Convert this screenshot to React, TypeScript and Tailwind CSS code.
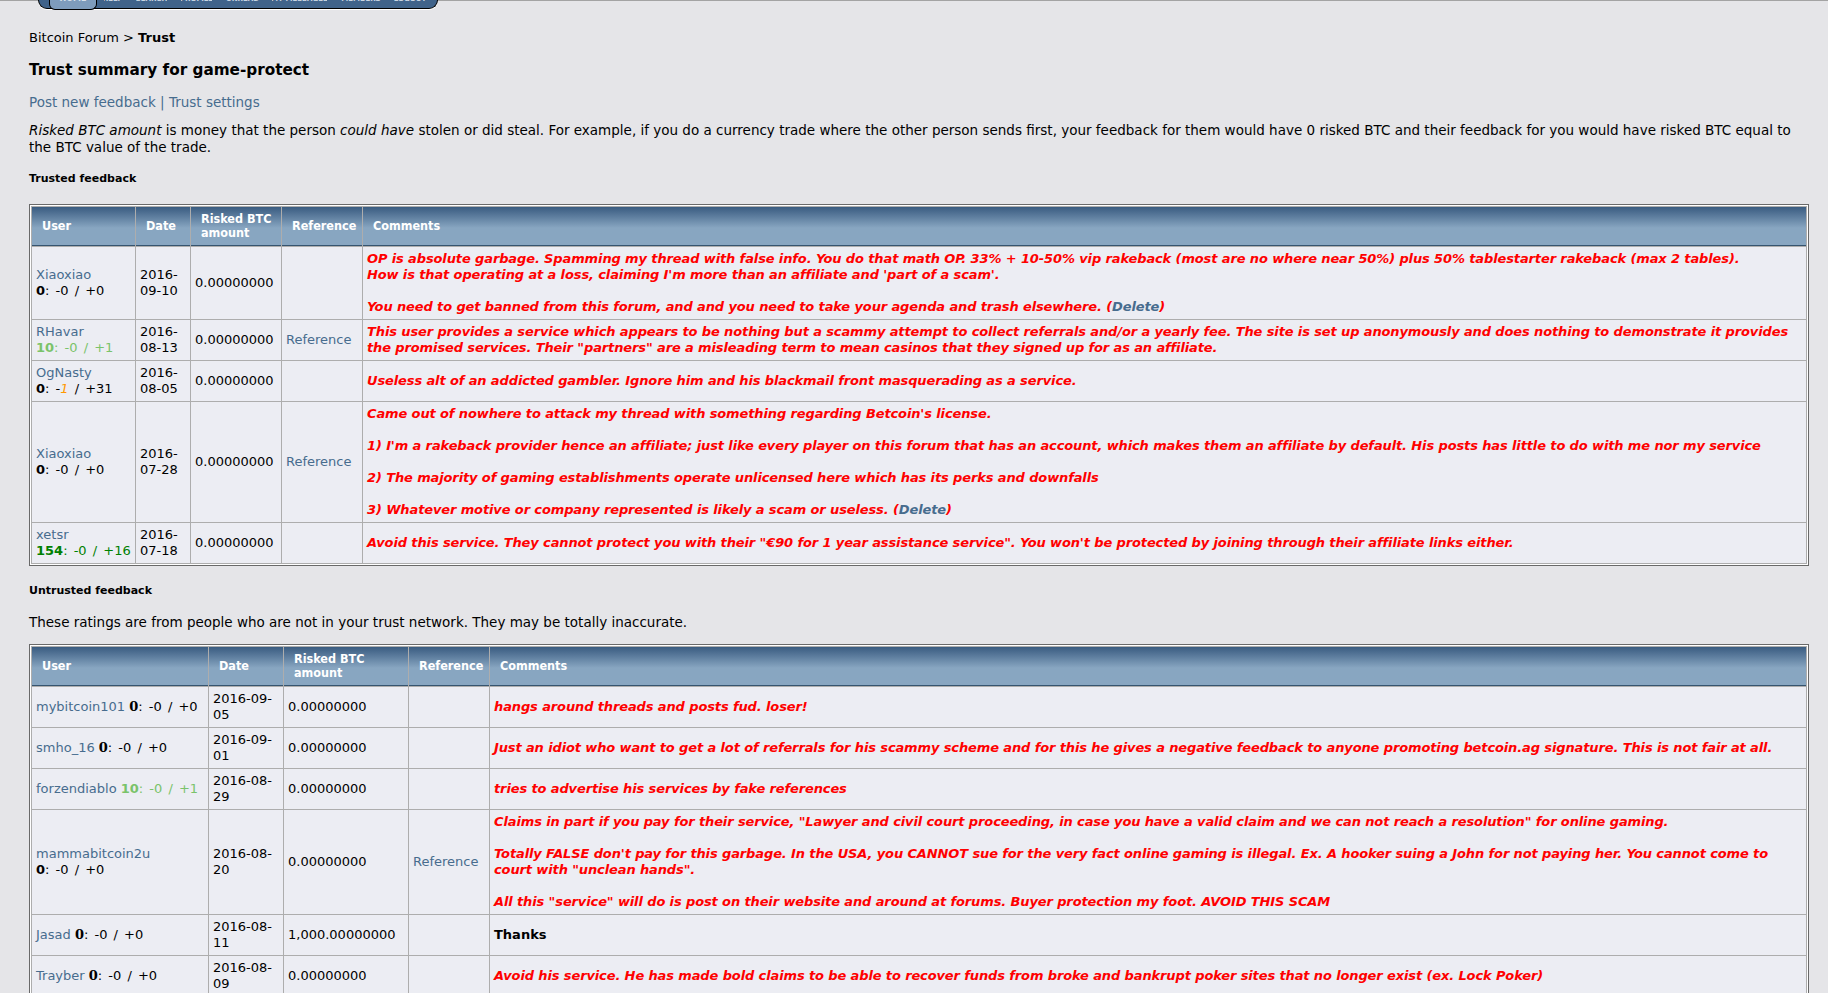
import React from 'react';

const tabs: { label: string; ml: string; w: string }[] = [
  { label: 'HELP', ml: 'ml-[7px]', w: 'w-[17px]' },
  { label: 'SEARCH', ml: 'ml-[15px]', w: 'w-[31px]' },
  { label: 'PROFILE', ml: 'ml-[14px]', w: 'w-[31px]' },
  { label: 'UNREAD', ml: 'ml-[14px]', w: 'w-[33px]' },
  { label: 'MY MESSAGES', ml: 'ml-[13px]', w: 'w-[55px]' },
  { label: 'MEMBERS', ml: 'ml-[14px]', w: 'w-[40px]' },
  { label: 'LOGOUT', ml: 'ml-[13px]', w: 'w-[32px]' },
];

const Link = ({ children }: { children: React.ReactNode }) => (
  <a href="#" className="text-[#476c8e]">
    {children}
  </a>
);

const Red = ({ children }: { children: React.ReactNode }) => (
  <span className="text-[13px] font-bold italic tracking-[-0.12px] text-[#ff0000]">{children}</span>
);

const Th = ({ children, w }: { children: React.ReactNode; w?: string }) => (
  <th
    className={`${w ?? ''} border-b border-[#35546f] bg-linear-to-b from-[#3a5c81] via-[#88a6c1] via-55% to-[#88a6c1] py-[5px] pl-[10px] pr-1 text-left align-middle font-['DejaVu_Sans_Condensed','DejaVu_Sans',sans-serif] text-[12.5px] font-bold leading-[14px] text-white`}
  >
    {children}
  </th>
);

const Td = ({ children, nowrap }: { children?: React.ReactNode; nowrap?: boolean }) => (
  <td className={`bg-[#ecedf3] p-1 align-middle leading-4 ${nowrap ? 'whitespace-nowrap' : ''}`}>{children}</td>
);

const Head = ({ widths }: { widths: string[] }) => (
  <thead>
    <tr>
      <Th w={widths[0]}>User</Th>
      <Th w={widths[1]}>Date</Th>
      <Th w={widths[2]}>
        Risked BTC
        <br />
        amount
      </Th>
      <Th w={widths[3]}>Reference</Th>
      <Th>Comments</Th>
    </tr>
  </thead>
);

const Zero = () => (
  <span className="[word-spacing:2px]">
    <b>0</b>: -0 / +0
  </span>
);

const SerifZero = () => (
  <span className="[word-spacing:2px]">
    <b className="font-['DejaVu_Serif',serif]">0</b>: -0 / +0
  </span>
);

export default function App() {
  return (
    <div className="min-h-screen border-t border-[#a3a3a3] bg-[#e5e5e8] pb-10 pl-[29px] pr-[19px] font-['DejaVu_Sans',sans-serif] text-[13px] text-black">
      {/* cut-off menu bar */}
      <div className="-mt-px ml-[9px] flex h-[9px] w-[400px] items-start rounded-b-[9px] border border-t-0 border-black bg-[#40638a] pl-[10px] shadow-[0_1px_0_#fff]">
        <div className="flex h-[10px] w-[48px] justify-center overflow-hidden rounded-b-[6px] border border-t-0 border-black bg-[#7e9cbc]">
          <span className="block -translate-y-[6px] text-[8px] font-bold leading-[10px] text-[#d8e2ec]">HOME</span>
        </div>
        {tabs.map((t) => (
          <div key={t.label} className={`${t.ml} ${t.w} flex h-[8px] justify-center overflow-hidden`}>
            <span className="block -translate-y-[6px] whitespace-nowrap text-[7px] font-bold leading-[10px] text-[#c9d5e2]">
              {t.label}
            </span>
          </div>
        ))}
      </div>

      <div className="mt-[21px] leading-4">
        <a href="#" className="text-black">
          Bitcoin Forum
        </a>{' '}
        &gt; <b>Trust</b>
      </div>

      <h1 className="mt-[14px] text-[15.25px] font-bold leading-5">Trust summary for game-protect</h1>

      <div className="mt-[14px] text-[13.5px] leading-4 text-[#476c8e]">
        <Link>Post new feedback</Link> | <Link>Trust settings</Link>
      </div>

      <p className="mt-[12px] text-[13.5px] leading-[17px]">
        <span className="whitespace-nowrap">
          <i>Risked BTC amount</i> is money that the person <i>could have</i> stolen or did steal. For example, if you do a
          currency trade where the other person sends first, your feedback for them would have 0 risked BTC and their
          feedback for you would have risked BTC equal to
        </span>
        <br />
        the BTC value of the trade.
      </p>

      <div className="mt-[15px] text-[11px] font-bold leading-4">Trusted feedback</div>

      <div className="mt-[17px] border border-[#696969] bg-white p-px">
        <table className="w-full table-fixed border-separate border-spacing-[1px] bg-[#adadad]">
          <Head widths={['w-[103px]', 'w-[54px]', 'w-[90px]', 'w-[80px]']} />
          <tbody>
            <tr>
              <Td>
                <Link>Xiaoxiao</Link>
                <br />
                <Zero />
              </Td>
              <Td>
                2016-
                <br />
                09-10
              </Td>
              <Td>0.00000000</Td>
              <Td />
              <Td nowrap>
                <Red>
                  OP is absolute garbage. Spamming my thread with false info. You do that math OP. 33% + 10-50% vip
                  rakeback (most are no where near 50%) plus 50% tablestarter rakeback (max 2 tables).
                  <br />
                  How is that operating at a loss, claiming I'm more than an affiliate and 'part of a scam'.
                  <br />
                  <br />
                  You need to get banned from this forum, and and you need to take your agenda and trash elsewhere. (
                  <Link>Delete</Link>)
                </Red>
              </Td>
            </tr>
            <tr>
              <Td>
                <Link>RHavar</Link>
                <br />
                <span className="text-[#7ac36a] [word-spacing:2px]">
                  <b>10</b>: -0 / +1
                </span>
              </Td>
              <Td>
                2016-
                <br />
                08-13
              </Td>
              <Td>0.00000000</Td>
              <Td>
                <Link>Reference</Link>
              </Td>
              <Td nowrap>
                <Red>
                  This user provides a service which appears to be nothing but a scammy attempt to collect referrals
                  and/or a yearly fee. The site is set up anonymously and does nothing to demonstrate it provides
                  <br />
                  the promised services. Their "partners" are a misleading term to mean casinos that they signed up for
                  as an affiliate.
                </Red>
              </Td>
            </tr>
            <tr>
              <Td>
                <Link>OgNasty</Link>
                <br />
                <span className="[word-spacing:2px]">
                  <b>0</b>: -<span className="italic text-[#ff9900]">1</span> / +31
                </span>
              </Td>
              <Td>
                2016-
                <br />
                08-05
              </Td>
              <Td>0.00000000</Td>
              <Td />
              <Td nowrap>
                <Red>Useless alt of an addicted gambler. Ignore him and his blackmail front masquerading as a service.</Red>
              </Td>
            </tr>
            <tr>
              <Td>
                <Link>Xiaoxiao</Link>
                <br />
                <Zero />
              </Td>
              <Td>
                2016-
                <br />
                07-28
              </Td>
              <Td>0.00000000</Td>
              <Td>
                <Link>Reference</Link>
              </Td>
              <Td nowrap>
                <Red>
                  Came out of nowhere to attack my thread with something regarding Betcoin's license.
                  <br />
                  <br />
                  1) I'm a rakeback provider hence an affiliate; just like every player on this forum that has an
                  account, which makes them an affiliate by default. His posts has little to do with me nor my service
                  <br />
                  <br />
                  2) The majority of gaming establishments operate unlicensed here which has its perks and downfalls
                  <br />
                  <br />
                  3) Whatever motive or company represented is likely a scam or useless. (<Link>Delete</Link>)
                </Red>
              </Td>
            </tr>
            <tr>
              <Td>
                <Link>xetsr</Link>
                <br />
                <span className="text-[#008000] [word-spacing:2px]">
                  <b>154</b>: -0 / +16
                </span>
              </Td>
              <Td>
                2016-
                <br />
                07-18
              </Td>
              <Td>0.00000000</Td>
              <Td />
              <Td nowrap>
                <Red>
                  Avoid this service. They cannot protect you with their "€90 for 1 year assistance service". You won't
                  be protected by joining through their affiliate links either.
                </Red>
              </Td>
            </tr>
          </tbody>
        </table>
      </div>

      <div className="mt-[17px] text-[11px] font-bold leading-4">Untrusted feedback</div>

      <p className="mt-[14px] text-[13.5px] leading-[18px]">
        These ratings are from people who are not in your trust network. They may be totally inaccurate.
      </p>

      <div className="mt-[13px] border border-[#696969] bg-white p-px">
        <table className="w-full table-fixed border-separate border-spacing-[1px] bg-[#adadad]">
          <Head widths={['w-[176px]', 'w-[74px]', 'w-[124px]', 'w-[80px]']} />
          <tbody>
            <tr>
              <Td nowrap>
                <Link>mybitcoin101</Link> <SerifZero />
              </Td>
              <Td>
                2016-09-
                <br />
                05
              </Td>
              <Td>0.00000000</Td>
              <Td />
              <Td nowrap>
                <Red>hangs around threads and posts fud. loser!</Red>
              </Td>
            </tr>
            <tr>
              <Td nowrap>
                <Link>smho_16</Link> <SerifZero />
              </Td>
              <Td>
                2016-09-
                <br />
                01
              </Td>
              <Td>0.00000000</Td>
              <Td />
              <Td nowrap>
                <Red>
                  Just an idiot who want to get a lot of referrals for his scammy scheme and for this he gives a negative
                  feedback to anyone promoting betcoin.ag signature. This is not fair at all.
                </Red>
              </Td>
            </tr>
            <tr>
              <Td nowrap>
                <Link>forzendiablo</Link>{' '}
                <span className="text-[#7ac36a] [word-spacing:2px]">
                  <b>10</b>: -0 / +1
                </span>
              </Td>
              <Td>
                2016-08-
                <br />
                29
              </Td>
              <Td>0.00000000</Td>
              <Td />
              <Td nowrap>
                <Red>tries to advertise his services by fake references</Red>
              </Td>
            </tr>
            <tr>
              <Td>
                <Link>mammabitcoin2u</Link>
                <br />
                <Zero />
              </Td>
              <Td>
                2016-08-
                <br />
                20
              </Td>
              <Td>0.00000000</Td>
              <Td>
                <Link>Reference</Link>
              </Td>
              <Td nowrap>
                <Red>
                  Claims in part if you pay for their service, "Lawyer and civil court proceeding, in case you have a
                  valid claim and we can not reach a resolution" for online gaming.
                  <br />
                  <br />
                  Totally FALSE don't pay for this garbage. In the USA, you CANNOT sue for the very fact online gaming is
                  illegal. Ex. A hooker suing a John for not paying her. You cannot come to
                  <br />
                  court with "unclean hands".
                  <br />
                  <br />
                  All this "service" will do is post on their website and around at forums. Buyer protection my foot.
                  AVOID THIS SCAM
                </Red>
              </Td>
            </tr>
            <tr>
              <Td nowrap>
                <Link>Jasad</Link> <SerifZero />
              </Td>
              <Td>
                2016-08-
                <br />
                11
              </Td>
              <Td>1,000.00000000</Td>
              <Td />
              <Td nowrap>
                <b>Thanks</b>
              </Td>
            </tr>
            <tr>
              <Td nowrap>
                <Link>Trayber</Link> <SerifZero />
              </Td>
              <Td>
                2016-08-
                <br />
                09
              </Td>
              <Td>0.00000000</Td>
              <Td />
              <Td nowrap>
                <Red>
                  Avoid his service. He has made bold claims to be able to recover funds from broke and bankrupt poker
                  sites that no longer exist (ex. Lock Poker)
                </Red>
              </Td>
            </tr>
          </tbody>
        </table>
      </div>
    </div>
  );
}
